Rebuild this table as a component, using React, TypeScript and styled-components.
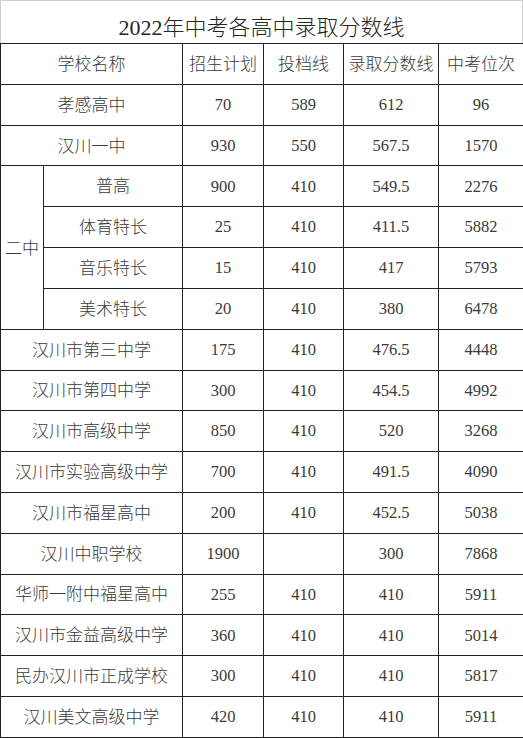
import React from 'react';
import styled, { createGlobalStyle } from 'styled-components';

const GlobalStyle = createGlobalStyle`
  html, body {
    margin: 0;
    padding: 0;
    background: #ffffff;
  }
  body {
    font-family: "Liberation Serif", "Noto Sans CJK SC", serif;
    color: #383838;
  }
`;

const Page = styled.div`
  width: 523px;
  height: 738px;
  box-sizing: border-box;
  display: flex;
  flex-direction: column;
  background: #ffffff;
`;

const Title = styled.div`
  height: 43px;
  box-sizing: border-box;
  border: 1px solid #cfcfcf;
  border-bottom: none;
  display: flex;
  align-items: center;
  justify-content: center;
  font-size: 22px;
  font-weight: 300;
  color: #262626;
  padding-top: 5px;
`;

const Table = styled.table`
  width: 523px;
  height: 695px;
  border-collapse: collapse;
  table-layout: fixed;
`;

const Row = styled.tr`
  height: 40.8px;
`;

const Cell = styled.td`
  border: 1.6px solid #222222;
  padding: 0;
  padding-top: 1px;
  text-align: center;
  vertical-align: middle;
  font-size: 17px;
  font-weight: 300;
  color: #3a3a3a;
  white-space: nowrap;
  overflow: hidden;
  line-height: 1;
`;

const NumCell = styled(Cell)`
  font-size: 16.5px;
  font-weight: 400;
`;

type School = {
  name: string;
  plan: string;
  line: string;
  score: string;
  rank: string;
};

const before: School[] = [
  { name: '孝感高中', plan: '70', line: '589', score: '612', rank: '96' },
  { name: '汉川一中', plan: '930', line: '550', score: '567.5', rank: '1570' },
];

const second: School[] = [
  { name: '普高', plan: '900', line: '410', score: '549.5', rank: '2276' },
  { name: '体育特长', plan: '25', line: '410', score: '411.5', rank: '5882' },
  { name: '音乐特长', plan: '15', line: '410', score: '417', rank: '5793' },
  { name: '美术特长', plan: '20', line: '410', score: '380', rank: '6478' },
];

const after: School[] = [
  { name: '汉川市第三中学', plan: '175', line: '410', score: '476.5', rank: '4448' },
  { name: '汉川市第四中学', plan: '300', line: '410', score: '454.5', rank: '4992' },
  { name: '汉川市高级中学', plan: '850', line: '410', score: '520', rank: '3268' },
  { name: '汉川市实验高级中学', plan: '700', line: '410', score: '491.5', rank: '4090' },
  { name: '汉川市福星高中', plan: '200', line: '410', score: '452.5', rank: '5038' },
  { name: '汉川中职学校', plan: '1900', line: '', score: '300', rank: '7868' },
  { name: '华师一附中福星高中', plan: '255', line: '410', score: '410', rank: '5911' },
  { name: '汉川市金益高级中学', plan: '360', line: '410', score: '410', rank: '5014' },
  { name: '民办汉川市正成学校', plan: '300', line: '410', score: '410', rank: '5817' },
  { name: '汉川美文高级中学', plan: '420', line: '410', score: '410', rank: '5911' },
];

const Numbers = ({ s }: { s: School }) => (
  <>
    <NumCell>{s.plan}</NumCell>
    <NumCell>{s.line}</NumCell>
    <NumCell>{s.score}</NumCell>
    <NumCell>{s.rank}</NumCell>
  </>
);

export default function App() {
  return (
    <Page>
      <GlobalStyle />
      <Title>2022年中考各高中录取分数线</Title>
      <Table>
        <colgroup>
          <col style={{ width: 43 }} />
          <col style={{ width: 139 }} />
          <col style={{ width: 81 }} />
          <col style={{ width: 80 }} />
          <col style={{ width: 95 }} />
          <col style={{ width: 85 }} />
        </colgroup>
        <tbody>
          <Row>
            <Cell colSpan={2}>学校名称</Cell>
            <Cell>招生计划</Cell>
            <Cell>投档线</Cell>
            <Cell>录取分数线</Cell>
            <Cell>中考位次</Cell>
          </Row>
          {before.map((s) => (
            <Row key={s.name}>
              <Cell colSpan={2}>{s.name}</Cell>
              <Numbers s={s} />
            </Row>
          ))}
          {second.map((s, i) => (
            <Row key={s.name}>
              {i === 0 && <Cell rowSpan={4}>二中</Cell>}
              <Cell>{s.name}</Cell>
              <Numbers s={s} />
            </Row>
          ))}
          {after.map((s) => (
            <Row key={s.name}>
              <Cell colSpan={2}>{s.name}</Cell>
              <Numbers s={s} />
            </Row>
          ))}
        </tbody>
      </Table>
    </Page>
  );
}
